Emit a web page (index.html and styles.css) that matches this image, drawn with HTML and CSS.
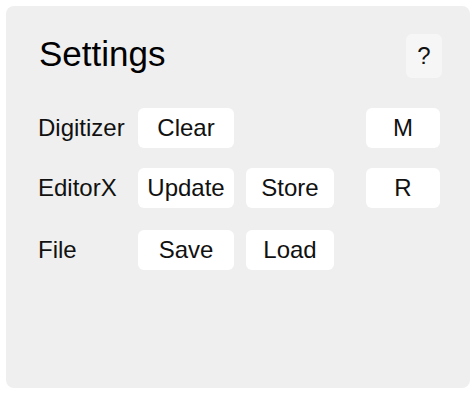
FILE: index.html
```html
<!DOCTYPE html>
<html lang="en">
  <head>
    <meta name="viewport" content="width=device-width" />
    <title>Settings</title>
    <link rel="stylesheet" href="styles.css">
  </head>
  <body>
    <main class="panel">
      <header class="panel-header">
        <h1>Settings</h1>
        <button class="help">?</button>
      </header>
      <div class="controls">
        <span class="label">Digitizer</span>
        <button class="btn">Clear</button>
        <span></span>
        <button class="btn btn-small">M</button>

        <span class="label">EditorX</span>
        <button class="btn">Update</button>
        <button class="btn">Store</button>
        <button class="btn btn-small">R</button>

        <span class="label last">File</span>
        <button class="btn last">Save</button>
        <button class="btn last">Load</button>
      </div>
    </main>
  </body>
</html>
```

FILE: styles.css
```css
body {
  margin: 6px;
  background: #fff;
  font-family: "Liberation Sans", Arial, sans-serif;
  color: #111;
}

.panel {
  box-sizing: border-box;
  width: 464px;
  height: 382px;
  padding: 28px 30px 0 32px;
  background: #efefef;
  border-radius: 8px;
}

.panel-header {
  display: flex;
  align-items: center;
  justify-content: space-between;
  height: 44px;
  margin-right: -2px;
}

.panel-header h1 {
  margin: 0 0 0 1px;
  font-size: 35px;
  font-weight: normal;
  line-height: 1;
  color: #000;
  padding-bottom: 6px;
}

.help {
  width: 36px;
  height: 44px;
  padding: 0;
  border: none;
  border-radius: 6px;
  background: #f6f6f6;
  font: inherit;
  font-size: 24px;
  color: #111;
}

.controls {
  display: grid;
  grid-template-columns: 88px 96px 88px 1fr;
  column-gap: 12px;
  row-gap: 20px;
  align-items: center;
  margin-top: 30px;
}

.label {
  font-size: 24px;
}

.btn {
  height: 40px;
  padding: 0;
  border: none;
  border-radius: 6px;
  background: #fff;
  font: inherit;
  font-size: 24px;
  color: #111;
}

.btn-small {
  width: 74px;
  justify-self: end;
}

.last {
  margin-top: 2px;
}
```
